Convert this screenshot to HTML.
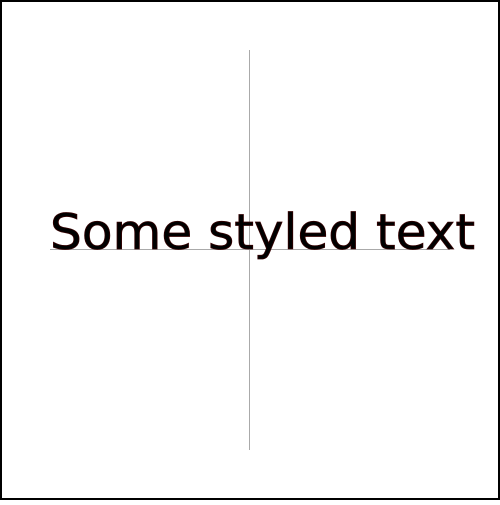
<!DOCTYPE html>
<html><head><style>html,body{margin:0;padding:0;background:#fff}</style></head><body>
<svg width="500" height="500" xmlns="http://www.w3.org/2000/svg">
<rect x="1" y="1" width="498" height="498" fill="#fff" stroke="#000" stroke-width="2"/>
<line x1="249.5" y1="50" x2="249.5" y2="450" stroke="#aaa" stroke-width="1"/>
<line x1="50" y1="249.5" x2="450" y2="249.5" stroke="#aaa" stroke-width="1"/>
<text x="50" y="249" font-family="DejaVu Sans, sans-serif" font-size="49" fill="#000" stroke="#300" stroke-width="0.8" textLength="425" lengthAdjust="spacingAndGlyphs">Some styled text</text>
</svg>
</body></html>
